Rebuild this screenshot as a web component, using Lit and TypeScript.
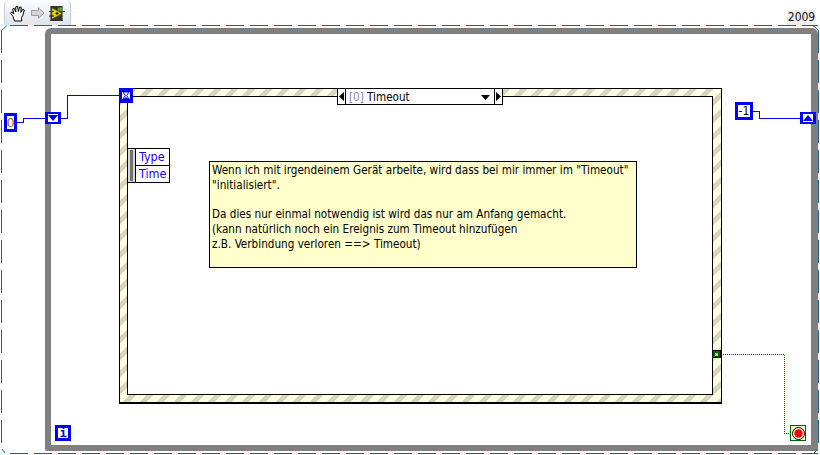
import { LitElement, html, css, svg } from "lit";
import { customElement } from "lit/decorators.js";

@customElement("app-root")
export class AppRoot extends LitElement {
  static styles = css`
    :host { display: block; width: 820px; height: 455px; position: relative; overflow: hidden; background: #fff; font-family: "DejaVu Sans Condensed", "DejaVu Sans", sans-serif; }
    * { box-sizing: border-box; }
    .tab { position: absolute; left: 4px; top: 0; width: 67px; height: 25px; background: linear-gradient(#fbfcfe, #e0e4ec); border: 1px solid #c5ccd8; border-top: 0; border-bottom: 0; border-top-left-radius: 5px; border-top-right-radius: 5px; display: flex; align-items: center; padding: 1px 0 0 5px; gap: 5px; }
    .ver { position: absolute; left: 787px; top: 10px; width: 29px; height: 15px; background: #eeeeee; font: 12px/15px "DejaVu Sans Condensed", sans-serif; text-align: center; color: #111; }
    .wires { position: absolute; left: 0; top: 0; pointer-events: none; }
    .loop { position: absolute; left: 45px; top: 28px; width: 773px; height: 423px; border: solid #808080; border-width: 6px 7px 6px 6px; border-radius: 6px 6px 0 2px; }
    .frame { position: absolute; left: 119px; top: 88px; width: 603px; height: 316px; border: 1px solid #000; border-bottom-width: 2px; padding: 7px 8px 7px 7px; background: repeating-linear-gradient(135deg, #fffde4 0 7px, #d8d6ba 7px 12px); }
    .inner { height: 100%; background: #fff; border: 1px solid #000; }
    .selector { position: absolute; left: 337px; top: 88px; width: 166px; height: 17px; background: #fff; border: 1px solid #000; display: flex; align-items: stretch; }
    .arrow { width: 8px; flex: none; display: flex; align-items: center; justify-content: center; border-right: 1px solid #000; }
    .arrow.end { border-right: 0; border-left: 1px solid #000; }
    .label { flex: 1; display: flex; align-items: center; justify-content: space-between; padding: 1px 4px 0 3px; white-space: pre; font: 11.6px/15px "DejaVu Sans Condensed", sans-serif; }
    .idx { color: #8a8aa5; }
    .blue { position: absolute; border: 3px solid #0000ff; background: #fff; display: flex; align-items: center; justify-content: center; }
    .hour { left: 119px; top: 88px; width: 14px; height: 15px; background: #fffde8; }
    .c0 { left: 4px; top: 113px; width: 13px; height: 19px; font: 13px/13px "Liberation Sans", sans-serif; color: #8a5a20; }
    .c1 { left: 735px; top: 102px; width: 18px; height: 18px; font: 12px/12px "DejaVu Sans Condensed", sans-serif; color: #000; }
    .sr { top: 112px; width: 16px; height: 12px; background: #fff; border-width: 2px 3px; }
    .srl { left: 45px; }
    .srr { left: 800px; }
    .iter { left: 55px; top: 425px; width: 16px; height: 16px; background: #ffffcc; color: #0000ff; font: bold 12px/10px "DejaVu Sans Mono", monospace; }
    .ev { position: absolute; left: 127px; top: 148px; width: 43px; height: 35px; display: flex; background: #fff; border: 1px solid #000; }
    .grip { width: 8px; background: #d8d8d8; border-right: 1px solid #000; padding: 1px 2px; display: flex; }
    .grip i { flex: 1; background: #707070; }
    .names { flex: 1; display: flex; flex-direction: column; color: #2200ff; font: 12.5px/16px "DejaVu Sans Condensed", sans-serif; }
    .names span { flex: 1; padding-left: 3px; }
    .names span + span { border-top: 1px solid #000; }
    .note { position: absolute; left: 209px; top: 161px; width: 428px; height: 107px; background: #ffffcc; border: 1px solid #000; padding: 1px 2px; font: 11.64px/14.8px "DejaVu Sans Condensed", sans-serif; white-space: pre; color: #000; }
    .term { position: absolute; left: 712px; top: 350px; width: 9px; height: 8px; background: #006400; border: 1px solid #000; display: flex; align-items: center; justify-content: center; }
    .term i { width: 3px; height: 3px; background: #fff; border: 1px solid #5f5; }
    .stop { position: absolute; left: 790px; top: 425px; width: 16px; height: 16px; border: 1px solid #006400; background: #ffffcc; display: flex; align-items: center; justify-content: center; }
  `;

  private hand() {
    return html`<svg width="16" height="17" viewBox="0 0 16 17"><path fill="#fff" stroke="#000" stroke-width="1" d="M4.5 16 L3 11.5 L0.7 8.5 L1.5 7 L3.8 8.8 L2.6 4 L4.2 3.2 L5.8 7 L5.8 1.8 L7.7 1.4 L8.4 6.4 L9.6 2 L11.3 2.4 L10.8 7.4 L12.6 4.2 L14.3 5 L13 10 L11.6 12.6 L11.6 16 Z"/></svg>`;
  }
  private arrow() {
    return html`<svg width="14" height="12" viewBox="0 0 14 12"><path fill="#d6d6d6" stroke="#9a9a9a" d="M0.5 3.5 H7.5 V0.8 L13 6 L7.5 11.2 V8.5 H0.5 Z"/></svg>`;
  }
  private vi() {
    return html`<svg width="16" height="15" viewBox="0 0 16 15" style="margin-left:-1px">
      <rect x="1" y="0" width="13" height="15" fill="#333"/>
      <path d="M1.5 0.5 v14 M13.5 0.5 v14" stroke="#ccc" stroke-dasharray="1 1"/>
      <path d="M3 2 L13 7.5 L3 13 Z" fill="#e8d100" stroke="#6a5f00" stroke-width=".5"/>
      <rect x="9" y="1.5" width="4" height="4" fill="#60a020"/>
      <path d="M0 5.5 H5 M10 5.5 H16" stroke="#e00000"/>
      <path d="M0 10 H5" stroke="#0000e0"/>
      <path d="M8 6 v3 M6.5 7.5 h3" stroke="#000"/>
    </svg>`;
  }

  render() {
    return html`
      <div class="tab">${this.hand()}${this.arrow()}${this.vi()}</div>
      <div class="ver">2009</div>
      <div class="loop"></div>
      <svg class="wires" width="820" height="455" shape-rendering="crispEdges" fill="none">
        ${svg`<path d="M7 25.5 H818" stroke="#1a6496" stroke-dasharray="18 6" stroke-dashoffset="-3"/>
        <path d="M1.5 30 V449" stroke="#1a6496" stroke-dasharray="23 7"/>
        <path d="M10 453.5 H818" stroke="#1a6496" stroke-width="1" stroke-dasharray="18 6"/>
        <path d="M818.5 30 V449" stroke="#1a6496" stroke-dasharray="23 7" />
        <path d="M2 30 L7 25.5 M813 25.5 L818 30 M2 449 L5 453 M818 449 L814 453" stroke="#1a6496" shape-rendering="auto"/>
        <path d="M17 122.5 H23.5 V118.5 H45" stroke="#0000ff"/>
        <path d="M61 118.5 H67.5 V95.5 H119" stroke="#0000ff"/>
        <path d="M753 111.5 H759.5 V118.5 H800" stroke="#0000ff"/>
        <path d="M721 354.5 H784.5 V433.5 H790" stroke="#006400" stroke-dasharray="1 1"/>`}
      </svg>
      <div class="frame"><div class="inner"></div></div>
      <div class="selector">
        <div class="arrow"><svg width="5" height="9"><path d="M5 0 V9 L0 4.5 Z"/></svg></div>
        <div class="label"><span><span class="idx">[0]</span> Timeout</span><svg width="9" height="5"><path d="M0 0 H9 L4.5 5 Z"/></svg></div>
        <div class="arrow end"><svg width="5" height="9"><path d="M0 0 V9 L5 4.5 Z"/></svg></div>
      </div>
      <div class="blue hour"><svg width="8" height="9"><path d="M0 0.5 H8 M0 8.5 H8" stroke="#0000ff"/><path d="M1 1 H7 L4.6 4.5 L7 8 H1 L3.4 4.5 Z" fill="#fff" stroke="#0000ff"/><path d="M2 8 H6 L4 6 Z" fill="#0000ff"/></svg></div>
      <div class="blue c0">0</div>
      <div class="blue sr srl"><svg width="10" height="6"><path d="M0 0 H10 L5 6 Z" fill="#0000ff"/></svg></div>
      <div class="blue c1">-1</div>
      <div class="blue sr srr"><svg width="10" height="6"><path d="M0 6 H10 L5 0 Z" fill="#0000ff"/></svg></div>
      <div class="blue iter">i</div>
      <div class="ev">
        <div class="grip"><i></i></div>
        <div class="names"><span>Type</span><span>Time</span></div>
      </div>
      <div class="note">Wenn ich mit irgendeinem Gerät arbeite, wird dass bei mir immer im "Timeout"
"initialisiert".

Da dies nur einmal notwendig ist wird das nur am Anfang gemacht.
(kann natürlich noch ein Ereignis zum Timeout hinzufügen
z.B. Verbindung verloren ==> Timeout)</div>
      <div class="term"><i></i></div>
      <div class="stop"><svg width="13" height="13"><circle cx="6.5" cy="6.5" r="6" fill="#fff" stroke="#000"/><circle cx="6.5" cy="6.5" r="4.2" fill="#ff0000"/></svg></div>
    `;
  }
}
